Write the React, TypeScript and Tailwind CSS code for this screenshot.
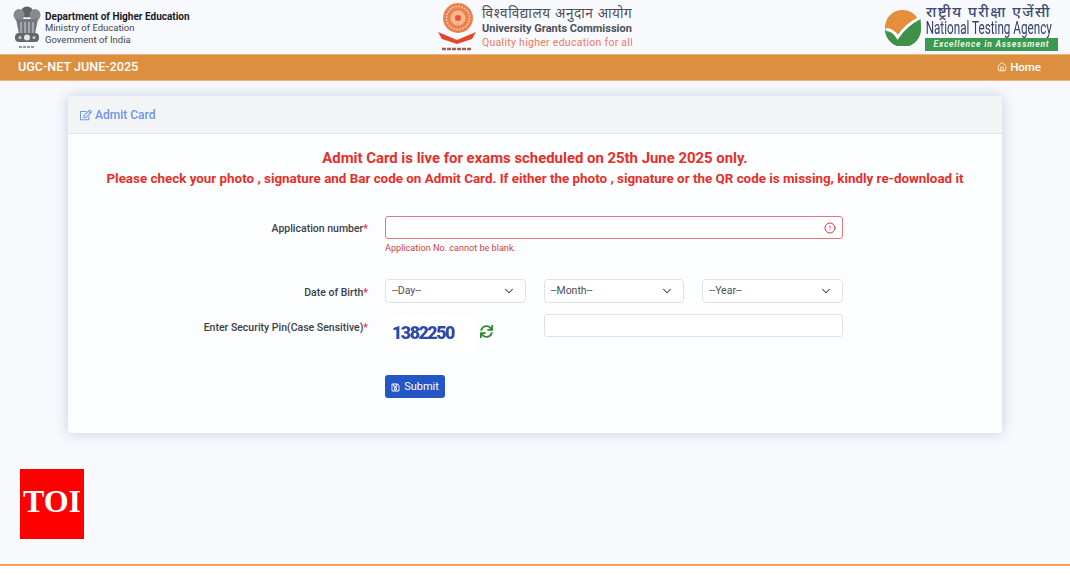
import { ChevronDown, CircleAlert, Home } from 'lucide-react'
import { FaRegEdit, FaRegSave, FaSync } from 'react-icons/fa'

function Emblem() {
  return (
    <svg width="28" height="44" viewBox="0 0 28 44" className="shrink-0">
      <ellipse cx="14" cy="7" rx="6" ry="5.500" fill="#5f6367" />
      <ellipse cx="6" cy="10" rx="5.500" ry="6" fill="#868a8e" />
      <ellipse cx="22" cy="10" rx="5.500" ry="6" fill="#868a8e" />
      <path d="M3 14h22l-3 15H6z" fill="#74787c" />
      <path d="M8 17v11M12 17v11M16 17v11M20 17v11" stroke="#d5d7da" strokeWidth="1" />
      <rect x="2" y="28" width="24" height="9" rx="4" fill="#63676b" />
      <circle cx="14" cy="32.500" r="3" fill="#e5e6e8" />
      <circle cx="7" cy="32.500" r="1.500" fill="#c9cbce" />
      <circle cx="21" cy="32.500" r="1.500" fill="#c9cbce" />
      <path d="M6 42h16" stroke="#77797c" strokeWidth="1.500" strokeDasharray="3 1" />
    </svg>
  )
}

function UgcLogo() {
  return (
    <svg width="40" height="50" viewBox="0 0 40 50" className="shrink-0">
      <circle cx="21" cy="16" r="15" fill="#ec8150" />
      <circle cx="21" cy="16" r="11.500" fill="none" stroke="#fbd9c4" strokeWidth="1.500" strokeDasharray="1.500 1.500" />
      <circle cx="21" cy="16" r="7.500" fill="#f6b78f" />
      <circle cx="21" cy="16" r="3" fill="#e4572e" />
      <path d="M1 30l19 8 19-8-4 7-15 5-15-5z" fill="#e5452b" />
      <path d="M5 47h30" stroke="#a8604c" strokeWidth="2.500" strokeDasharray="4 1" />
    </svg>
  )
}

function NtaLogo() {
  return (
    <svg width="37" height="37" viewBox="0 0 38 38" className="shrink-0">
      <circle cx="19" cy="19" r="18" fill="#e58f3d" />
      <path d="M1 22c4 0 8 2 12 6 6-9 14-15 24-19 1 3 1 7 1 10a18 18 0 0 1-37 3z" fill="#3f9147" />
      <path d="M2 21c5 0 9 3 12 8 6-9 13-15 23-20" fill="none" stroke="#fff" strokeWidth="3" />
    </svg>
  )
}

function Label({ text }: { text: string }) {
  return (
    <label className="block w-[300px] shrink-0 text-right text-[10.500px] font-medium text-[#3b4046]">
      {text}
      <span className="text-red-500">*</span>
    </label>
  )
}

function FakeSelect({ label }: { label: string }) {
  return (
    <div className="flex h-[24px] items-center justify-between rounded border border-[#dee2e6] bg-white pl-[6px] pr-[9px] text-[10.500px] text-[#495057]">
      <span>{label}</span>
      <ChevronDown size={14} strokeWidth={1.8} className="text-[#343a40]" />
    </div>
  )
}

export default function App() {
  return (
    <div className="relative flex h-[578px] w-[1070px] flex-col overflow-hidden bg-[#f8f9fd] font-['Roboto',sans-serif]">
      <header className="flex h-[54px] shrink-0 items-center pl-[13px] pr-[12px]">
        <div className="flex w-[424px] items-center gap-[4px]">
          <Emblem />
          <div className="mt-[2px] text-[9.500px] leading-[11.500px] text-[#43474c]">
            <div className="text-[10px] font-bold text-[#17191c]">Department of Higher Education</div>
            <div>Ministry of Education</div>
            <div>Government of India</div>
          </div>
        </div>
        <div className="flex items-center gap-[5px]">
          <UgcLogo />
          <div className="w-[152px] whitespace-nowrap leading-none">
            <div className="font-['Noto_Sans',sans-serif] text-[13.500px] leading-[16px] tracking-[0.65px] text-[#4a4d55]">विश्वविद्यालय अनुदान आयोग</div>
            <div className="mt-[1px] text-[11px] font-bold leading-[13px] text-[#4d5058]">University Grants Commission</div>
            <div className="mt-[1px] text-[10.500px] leading-[13px] tracking-[0.28px] text-[#ef7a5d]">Quality higher education for all</div>
          </div>
        </div>
        <div className="ml-auto flex items-center gap-[4px]">
          <NtaLogo />
          <div className="w-[133px] whitespace-nowrap">
            <div className="pl-[1px] font-['Noto_Sans',sans-serif] text-[15px] font-medium leading-[15px] tracking-[1.5px] text-[#3c4a76]">राष्ट्रीय परीक्षा एजेंसी</div>
            <div className="origin-left scale-x-[0.65] pl-[1px] text-[18px] leading-[18px] text-[#34406b]">National Testing Agency</div>
            <div className="mt-[1px] h-[13px] bg-[#3c9a50] text-center text-[8.500px] font-bold italic leading-[13px] tracking-[0.8px] text-[#e8f5e6]">Excellence in Assessment</div>
          </div>
        </div>
      </header>

      <nav className="flex h-[27px] shrink-0 items-center justify-between border-y border-y-[#eeb27a] bg-[#dd8f40] pl-[18px] pr-[29px] text-white">
        <span className="text-[12.600px] font-medium">UGC-NET JUNE-2025</span>
        <span className="flex items-center gap-[3px] pt-[1px] text-[11.500px] font-medium">
          <Home size={10} className="-mt-[3px]" />
          Home
        </span>
      </nav>

      <main className="mx-[68px] mt-[15px] h-[337px] w-[934px] shrink-0 rounded-[3px] bg-[#fcfdfe] shadow-[0_0_14px_rgba(80,95,150,0.28)]">
        <div className="flex h-[38px] items-center gap-[3px] rounded-t-[3px] border-b border-b-[#e2e4e7] bg-[#f3f4f6] pl-[12px] text-[12px] font-medium text-[#6f95e8]">
          <FaRegEdit size={12} />
          Admit Card
        </div>

        <div className="pt-[15px] text-center font-bold text-[#e5302a]">
          <h2 className="text-[14.900px] leading-[18px]">Admit Card is live for exams scheduled on 25th June 2025 only.</h2>
          <p className="mt-[3px] text-[13.400px] leading-[18px]">
            Please check your photo , signature and Bar code on Admit Card. If either the photo , signature or the QR code is missing, kindly re-download it
          </p>
        </div>

        <div className="mt-[28px] flex gap-[17px]">
          <div className="pt-[5px]">
            <Label text="Application number" />
          </div>
          <div className="w-[458px]">
            <div className="flex h-[23px] items-center justify-end rounded-[3px] border border-[#e4757c] bg-white pr-[6px]">
              <CircleAlert size={12} className="text-[#dc3545]" />
            </div>
            <p className="mt-[3px] text-[9.100px] leading-[12px] text-[#d2403f]">Application No. cannot be blank.</p>
          </div>
        </div>

        <div className="mt-[25px] flex gap-[17px]">
          <div className="pt-[6px]">
            <Label text="Date of Birth" />
          </div>
          <div className="grid w-[458px] grid-cols-3 gap-[18px]">
            <FakeSelect label="--Day--" />
            <FakeSelect label="--Month--" />
            <FakeSelect label="--Year--" />
          </div>
        </div>

        <div className="mt-[11px] flex gap-[17px]">
          <div className="pt-[6px]">
            <Label text="Enter Security Pin(Case Sensitive)" />
          </div>
          <div className="grid w-[458px] grid-cols-3 gap-[18px]">
            <div className="flex items-start gap-[6px]">
              <div className="h-[38px] w-[89px] shrink-0 bg-white pl-[7px] pt-[9px] text-[18px] font-black leading-[20px] tracking-[-1.600px] text-[#2f4ba6]">
                <span className="block blur-[0.6px]">1382250</span>
              </div>
              <FaSync size={13} className="mt-[11px] text-[#2e8b2e]" />
            </div>
            <div className="col-span-2 h-[23px] rounded-[3px] border border-[#dee2e6] bg-white" />
          </div>
        </div>

        <div className="mt-[23px] pl-[317px]">
          <button className="flex h-[23px] w-[60px] items-center justify-center gap-[4px] rounded-[3px] bg-[#2456c4] pt-[1px] text-[11px] text-white">
            <FaRegSave size={9} />
            Submit
          </button>
        </div>
      </main>

      <footer className="mt-auto h-[14px] shrink-0 border-t-2 border-t-[#f0a45d] bg-white" />

      <div className="absolute left-[20px] top-[469px] flex h-[70px] w-[64px] items-center justify-center bg-[#ff0000] pb-[6px] font-['Liberation_Serif',serif] text-[32px] font-bold leading-none text-white">
        TOI
      </div>
    </div>
  )
}
